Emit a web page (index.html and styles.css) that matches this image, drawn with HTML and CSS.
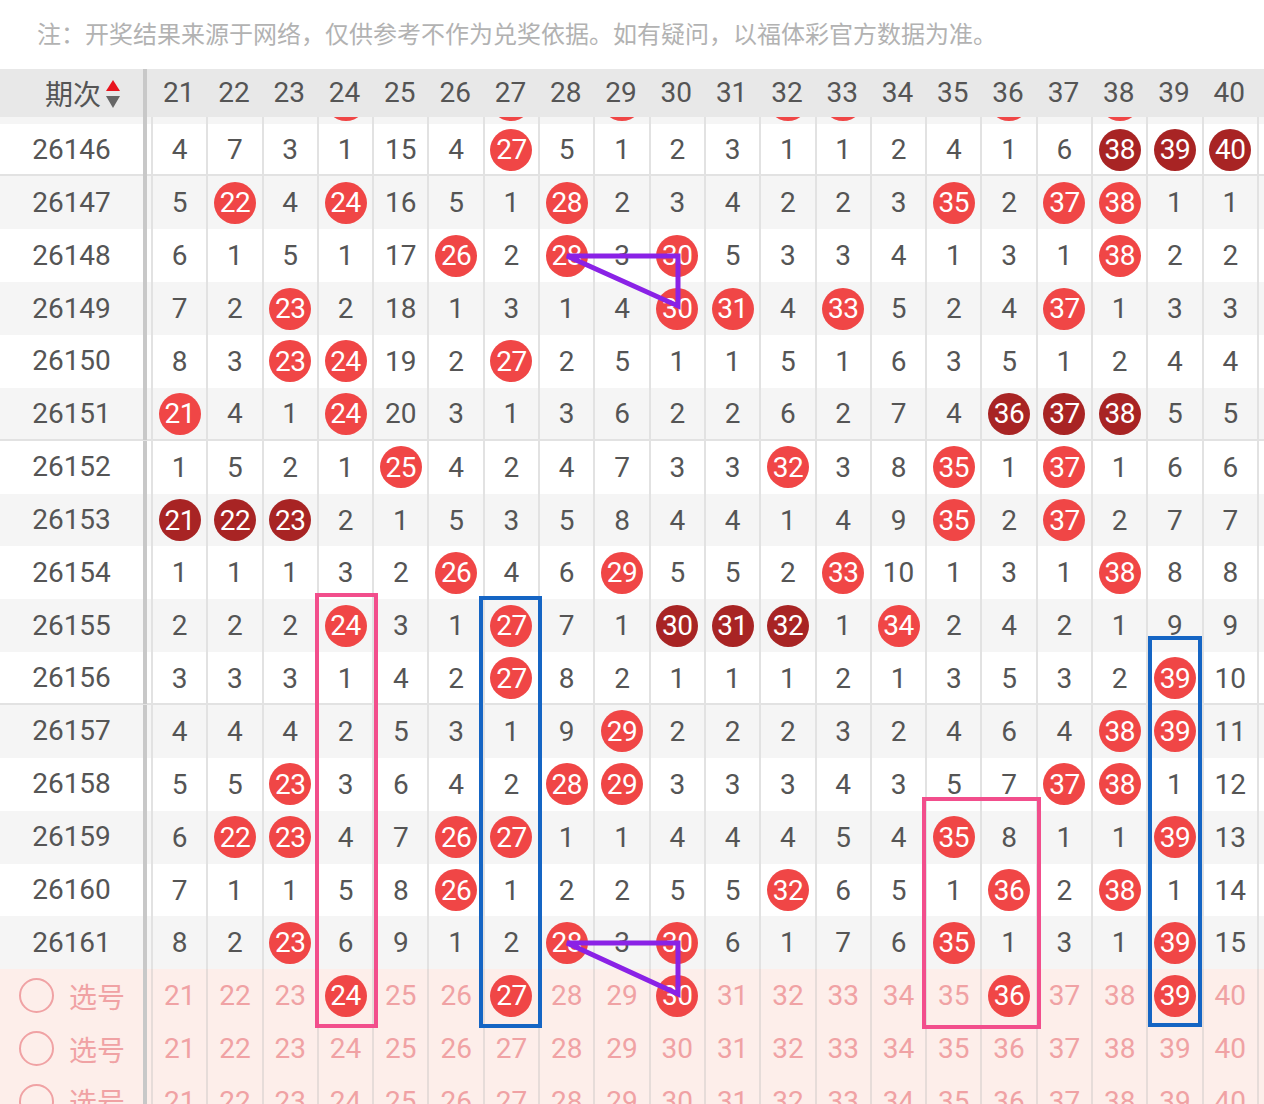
FILE: index.html
```html
<!DOCTYPE html>
<html lang="zh-CN">
<head>
<meta charset="utf-8">
<title>走势图</title>
<link rel="stylesheet" href="styles.css">
</head>
<body>
<div class="note">注：开奖结果来源于网络，仅供参考不作为兑奖依据。如有疑问，以福体彩官方数据为准。</div>

<div class="head">
  <div class="lc hl">期次<svg class="sort" width="14" height="30" viewBox="0 0 14 30"><polygon points="0,12 7,1 14,12" fill="#e8141e"/><polygon points="0,17 14,17 7,29" fill="#666"/></svg></div>
  <div class="sep"></div><div class="gap"></div>
  <i>21</i><i>22</i><i>23</i><i>24</i><i>25</i><i>26</i><i>27</i><i>28</i><i>29</i><i>30</i><i>31</i><i>32</i><i>33</i><i>34</i><i>35</i><i>36</i><i>37</i><i>38</i><i>39</i><i>40</i><i class="fill"></i>
</div>

<div class="body">
  <div class="r alt first"><div class="lc"></div><div class="sep"></div><div class="gap"></div>
    <i></i><i></i><i></i><i><b></b></i><i></i><i></i><i><b></b></i><i></i><i><b></b></i><i></i><i></i><i><b></b></i><i><b></b></i><i></i><i></i><i><b></b></i><i></i><i><b></b></i><i></i><i></i><i class="fill"></i></div>

  <div class="r g"><div class="lc">26146</div><div class="sep"></div><div class="gap"></div>
    <i>4</i><i>7</i><i>3</i><i>1</i><i>15</i><i>4</i><i><b>27</b></i><i>5</i><i>1</i><i>2</i><i>3</i><i>1</i><i>1</i><i>2</i><i>4</i><i>1</i><i>6</i><i><b class="d">38</b></i><i><b class="d">39</b></i><i><b class="d">40</b></i><i class="fill"></i></div>

  <div class="r alt"><div class="lc">26147</div><div class="sep"></div><div class="gap"></div>
    <i>5</i><i><b>22</b></i><i>4</i><i><b>24</b></i><i>16</i><i>5</i><i>1</i><i><b>28</b></i><i>2</i><i>3</i><i>4</i><i>2</i><i>2</i><i>3</i><i><b>35</b></i><i>2</i><i><b>37</b></i><i><b>38</b></i><i>1</i><i>1</i><i class="fill"></i></div>

  <div class="r"><div class="lc">26148</div><div class="sep"></div><div class="gap"></div>
    <i>6</i><i>1</i><i>5</i><i>1</i><i>17</i><i><b>26</b></i><i>2</i><i><b>28</b></i><i>3</i><i><b>30</b></i><i>5</i><i>3</i><i>3</i><i>4</i><i>1</i><i>3</i><i>1</i><i><b>38</b></i><i>2</i><i>2</i><i class="fill"></i></div>

  <div class="r alt"><div class="lc">26149</div><div class="sep"></div><div class="gap"></div>
    <i>7</i><i>2</i><i><b>23</b></i><i>2</i><i>18</i><i>1</i><i>3</i><i>1</i><i>4</i><i><b>30</b></i><i><b>31</b></i><i>4</i><i><b>33</b></i><i>5</i><i>2</i><i>4</i><i><b>37</b></i><i>1</i><i>3</i><i>3</i><i class="fill"></i></div>

  <div class="r"><div class="lc">26150</div><div class="sep"></div><div class="gap"></div>
    <i>8</i><i>3</i><i><b>23</b></i><i><b>24</b></i><i>19</i><i>2</i><i><b>27</b></i><i>2</i><i>5</i><i>1</i><i>1</i><i>5</i><i>1</i><i>6</i><i>3</i><i>5</i><i>1</i><i>2</i><i>4</i><i>4</i><i class="fill"></i></div>

  <div class="r alt g"><div class="lc">26151</div><div class="sep"></div><div class="gap"></div>
    <i><b>21</b></i><i>4</i><i>1</i><i><b>24</b></i><i>20</i><i>3</i><i>1</i><i>3</i><i>6</i><i>2</i><i>2</i><i>6</i><i>2</i><i>7</i><i>4</i><i><b class="d">36</b></i><i><b class="d">37</b></i><i><b class="d">38</b></i><i>5</i><i>5</i><i class="fill"></i></div>

  <div class="r"><div class="lc">26152</div><div class="sep"></div><div class="gap"></div>
    <i>1</i><i>5</i><i>2</i><i>1</i><i><b>25</b></i><i>4</i><i>2</i><i>4</i><i>7</i><i>3</i><i>3</i><i><b>32</b></i><i>3</i><i>8</i><i><b>35</b></i><i>1</i><i><b>37</b></i><i>1</i><i>6</i><i>6</i><i class="fill"></i></div>

  <div class="r alt"><div class="lc">26153</div><div class="sep"></div><div class="gap"></div>
    <i><b class="d">21</b></i><i><b class="d">22</b></i><i><b class="d">23</b></i><i>2</i><i>1</i><i>5</i><i>3</i><i>5</i><i>8</i><i>4</i><i>4</i><i>1</i><i>4</i><i>9</i><i><b>35</b></i><i>2</i><i><b>37</b></i><i>2</i><i>7</i><i>7</i><i class="fill"></i></div>

  <div class="r"><div class="lc">26154</div><div class="sep"></div><div class="gap"></div>
    <i>1</i><i>1</i><i>1</i><i>3</i><i>2</i><i><b>26</b></i><i>4</i><i>6</i><i><b>29</b></i><i>5</i><i>5</i><i>2</i><i><b>33</b></i><i>10</i><i>1</i><i>3</i><i>1</i><i><b>38</b></i><i>8</i><i>8</i><i class="fill"></i></div>

  <div class="r alt"><div class="lc">26155</div><div class="sep"></div><div class="gap"></div>
    <i>2</i><i>2</i><i>2</i><i><b>24</b></i><i>3</i><i>1</i><i><b>27</b></i><i>7</i><i>1</i><i><b class="d">30</b></i><i><b class="d">31</b></i><i><b class="d">32</b></i><i>1</i><i><b>34</b></i><i>2</i><i>4</i><i>2</i><i>1</i><i>9</i><i>9</i><i class="fill"></i></div>

  <div class="r g"><div class="lc">26156</div><div class="sep"></div><div class="gap"></div>
    <i>3</i><i>3</i><i>3</i><i>1</i><i>4</i><i>2</i><i><b>27</b></i><i>8</i><i>2</i><i>1</i><i>1</i><i>1</i><i>2</i><i>1</i><i>3</i><i>5</i><i>3</i><i>2</i><i><b>39</b></i><i>10</i><i class="fill"></i></div>

  <div class="r alt"><div class="lc">26157</div><div class="sep"></div><div class="gap"></div>
    <i>4</i><i>4</i><i>4</i><i>2</i><i>5</i><i>3</i><i>1</i><i>9</i><i><b>29</b></i><i>2</i><i>2</i><i>2</i><i>3</i><i>2</i><i>4</i><i>6</i><i>4</i><i><b>38</b></i><i><b>39</b></i><i>11</i><i class="fill"></i></div>

  <div class="r"><div class="lc">26158</div><div class="sep"></div><div class="gap"></div>
    <i>5</i><i>5</i><i><b>23</b></i><i>3</i><i>6</i><i>4</i><i>2</i><i><b>28</b></i><i><b>29</b></i><i>3</i><i>3</i><i>3</i><i>4</i><i>3</i><i>5</i><i>7</i><i><b>37</b></i><i><b>38</b></i><i>1</i><i>12</i><i class="fill"></i></div>

  <div class="r alt"><div class="lc">26159</div><div class="sep"></div><div class="gap"></div>
    <i>6</i><i><b>22</b></i><i><b>23</b></i><i>4</i><i>7</i><i><b>26</b></i><i><b>27</b></i><i>1</i><i>1</i><i>4</i><i>4</i><i>4</i><i>5</i><i>4</i><i><b>35</b></i><i>8</i><i>1</i><i>1</i><i><b>39</b></i><i>13</i><i class="fill"></i></div>

  <div class="r"><div class="lc">26160</div><div class="sep"></div><div class="gap"></div>
    <i>7</i><i>1</i><i>1</i><i>5</i><i>8</i><i><b>26</b></i><i>1</i><i>2</i><i>2</i><i>5</i><i>5</i><i><b>32</b></i><i>6</i><i>5</i><i>1</i><i><b>36</b></i><i>2</i><i><b>38</b></i><i>1</i><i>14</i><i class="fill"></i></div>

  <div class="r alt"><div class="lc">26161</div><div class="sep"></div><div class="gap"></div>
    <i>8</i><i>2</i><i><b>23</b></i><i>6</i><i>9</i><i>1</i><i>2</i><i><b>28</b></i><i>3</i><i><b>30</b></i><i>6</i><i>1</i><i>7</i><i>6</i><i><b>35</b></i><i>1</i><i>3</i><i>1</i><i><b>39</b></i><i>15</i><i class="fill"></i></div>

  <div class="r pick"><div class="lc pl"><span class="ring"></span>选号</div><div class="sep"></div><div class="gap"></div>
    <i>21</i><i>22</i><i>23</i><i><b>24</b></i><i>25</i><i>26</i><i><b>27</b></i><i>28</i><i>29</i><i><b>30</b></i><i>31</i><i>32</i><i>33</i><i>34</i><i>35</i><i><b>36</b></i><i>37</i><i>38</i><i><b>39</b></i><i>40</i><i class="fill"></i></div>

  <div class="r pick"><div class="lc pl"><span class="ring"></span>选号</div><div class="sep"></div><div class="gap"></div>
    <i>21</i><i>22</i><i>23</i><i>24</i><i>25</i><i>26</i><i>27</i><i>28</i><i>29</i><i>30</i><i>31</i><i>32</i><i>33</i><i>34</i><i>35</i><i>36</i><i>37</i><i>38</i><i>39</i><i>40</i><i class="fill"></i></div>

  <div class="r pick"><div class="lc pl"><span class="ring"></span>选号</div><div class="sep"></div><div class="gap"></div>
    <i>21</i><i>22</i><i>23</i><i>24</i><i>25</i><i>26</i><i>27</i><i>28</i><i>29</i><i>30</i><i>31</i><i>32</i><i>33</i><i>34</i><i>35</i><i>36</i><i>37</i><i>38</i><i>39</i><i>40</i><i class="fill"></i></div>
</div>

<svg class="overlay" width="1264" height="1104" viewBox="0 0 1264 1104">
  <g fill="none" stroke-width="4">
    <rect x="317" y="595" width="59" height="431" stroke="#f24e8c"/>
    <rect x="481" y="598" width="59" height="428" stroke="#1565c4"/>
    <rect x="1150" y="638" width="50" height="387" stroke="#1565c4"/>
    <rect x="924" y="799" width="115" height="228" stroke="#f24e8c"/>
  </g>
  <g fill="none" stroke="#8a22e6" stroke-width="5" stroke-linejoin="miter">
    <polygon points="567,256 678,256 678,306"/>
    <polygon points="567,943 678,943 678,994"/>
  </g>
</svg>
</body>
</html>
```

FILE: styles.css
```css
* {
  box-sizing: border-box;
  margin: 0;
  padding: 0;
}

body {
  width: 1264px;
  height: 1104px;
  overflow: hidden;
  position: relative;
  background: #fff;
  color: #555;
  font-family: Roboto, "Noto Sans CJK SC", sans-serif;
}

.note {
  height: 69px;
  padding-left: 37px;
  line-height: 66px;
  font-size: 24px;
  color: #b2b2b2;
  font-family: "Noto Sans CJK SC", sans-serif;
  white-space: nowrap;
}

.head,
.r {
  display: grid;
  grid-template-columns: 143px 4px 4px repeat(20, 55.3px) 1fr;
  align-items: center;
}

.head {
  height: 48px;
  background: #e8e8e8;
  font-size: 28px;
  position: relative;
  z-index: 2;
}

.head i {
  font-style: normal;
  text-align: center;
  line-height: 48px;
}

.head .lc {
  display: flex;
  align-items: center;
  justify-content: flex-end;
  padding-right: 23px;
  gap: 5px;
  font-family: "Noto Sans CJK SC", sans-serif;
  font-size: 28px;
  line-height: 48px;
}

.sort {
  display: block;
  margin-top: 1px;
}

.sep {
  align-self: stretch;
  background: #c8c8c8;
}

.gap {
  align-self: stretch;
}

.body {
  height: 987px;
  overflow: hidden;
}

.r {
  height: 52.87px;
  font-size: 28px;
  background: #fff;
}

.r.alt {
  background: #f5f5f5;
}

.r.g {
  border-bottom: 2px solid #e2e2e2;
}

.r.first {
  margin-top: -46.3px;
}

.r.first i b {
  transform: translateY(3px);
}

.r .lc {
  text-align: center;
  line-height: 52px;
}

.r i {
  font-style: normal;
  align-self: stretch;
  display: flex;
  align-items: center;
  justify-content: center;
  border-left: 2px solid #e2e2e2;
}

.r i b {
  font-weight: 400;
  width: 42px;
  height: 42px;
  border-radius: 50%;
  background: #f04646;
  color: #fff;
  display: flex;
  align-items: center;
  justify-content: center;
  letter-spacing: -0.5px;
}

.r i b.d {
  background: #a82424;
}

.r.pick {
  background: #fdeeea;
  color: #f0a2a4;
}

.r.pick i {
  border-left-color: #e6dcd9;
}

.pl {
  display: flex;
  align-items: center;
  padding-left: 19px;
  gap: 15px;
  font-family: "Noto Sans CJK SC", sans-serif;
  font-size: 28px;
  color: #f0a2a4;
}

.ring {
  width: 35px;
  height: 35px;
  border: 2px solid #f0a2a4;
  border-radius: 50%;
  flex: none;
}

.overlay {
  position: absolute;
  left: 0;
  top: 0;
  pointer-events: none;
  z-index: 3;
}
```
